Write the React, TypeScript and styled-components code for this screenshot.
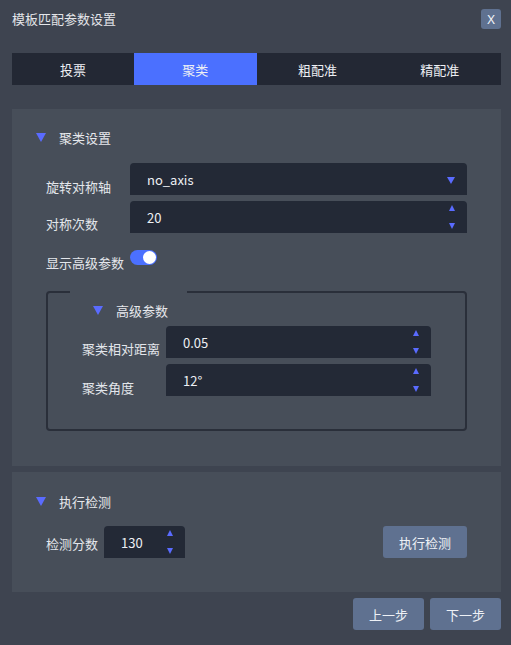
import React from "react";
import styled, { createGlobalStyle } from "styled-components";

const Global = createGlobalStyle`
  html, body { margin: 0; padding: 0; background: #3e4450; }
  * { box-sizing: border-box; }
  body { font-family: "Noto Sans CJK SC", "Noto Sans", sans-serif; font-size: 13px; color: #e3e6eb; }
`;

const Page = styled.div`
  width: 511px;
  height: 645px;
  background: #3e4450;
  padding: 9px 10px 0 12px;
  display: flex;
  flex-direction: column;
`;

const TitleBar = styled.div`
  display: flex;
  align-items: center;
  justify-content: space-between;
  height: 20px;
`;

const Title = styled.div`
  font-size: 13px;
  line-height: 20px;
  color: #e4e6ea;
`;

const CloseButton = styled.button`
  width: 20px;
  height: 20px;
  border: none;
  border-radius: 3px;
  background: #5f7190;
  color: #f2f4f8;
  font-family: "Noto Sans", sans-serif;
  font-size: 13px;
  line-height: 20px;
  padding: 0;
`;

const Tabs = styled.div`
  margin-top: 24px;
  height: 32px;
  display: grid;
  grid-template-columns: repeat(4, 1fr);
  background: #232834;
`;

const Tab = styled.div<{ $active?: boolean }>`
  display: flex;
  align-items: center;
  justify-content: center;
  font-size: 13px;
  color: #eef0f4;
  background: ${(p) => (p.$active ? "#4b70ff" : "transparent")};
`;

const Panel = styled.section<{ $top: number; $pt: number; $pb: number }>`
  margin-top: ${(p) => p.$top}px;
  background: #474e59;
  padding: ${(p) => p.$pt}px 34px ${(p) => p.$pb}px 34px;
  display: flex;
  flex-direction: column;
`;

const SectionHeader = styled.div<{ $indent: number }>`
  display: flex;
  align-items: center;
  height: 20px;
  margin-left: ${(p) => p.$indent}px;
  font-size: 13px;
  color: #e6e8ec;
`;

const Caret = styled.span`
  width: 0;
  height: 0;
  border-left: 5.5px solid transparent;
  border-right: 5.5px solid transparent;
  border-top: 9px solid #5a6bff;
  margin-right: 13px;
`;

const FormRow = styled.div<{ $top: number }>`
  display: grid;
  grid-template-columns: 84px 1fr;
  grid-template-rows: 32px;
  align-items: start;
  margin-top: ${(p) => p.$top}px;
`;

const Label = styled.div<{ $pt: number }>`
  font-size: 13px;
  line-height: 20px;
  padding-top: ${(p) => p.$pt}px;
  color: #e3e6eb;
  white-space: nowrap;
`;

const Field = styled.div<{ $width?: number }>`
  position: relative;
  height: 32px;
  ${(p) => (p.$width ? `width: ${p.$width}px;` : "")}
  background: #232936;
  border-radius: 4px 4px 0 0;
  display: flex;
  align-items: center;
  padding-left: 17px;
  font-size: 13px;
  color: #eef0f4;
`;

const SelectArrow = styled.span`
  position: absolute;
  right: 12px;
  top: 14px;
  width: 0;
  height: 0;
  border-left: 4px solid transparent;
  border-right: 4px solid transparent;
  border-top: 7px solid #5a6bff;
`;

const Spinner = styled.span<{ $right: number }>`
  position: absolute;
  right: ${(p) => p.$right}px;
  top: 4px;
  bottom: 4px;
  display: flex;
  flex-direction: column;
  justify-content: space-between;
`;

const SpinUp = styled.span`
  width: 0;
  height: 0;
  border-left: 3.5px solid transparent;
  border-right: 3.5px solid transparent;
  border-bottom: 6px solid #5a6bff;
`;

const SpinDown = styled.span`
  width: 0;
  height: 0;
  border-left: 3.5px solid transparent;
  border-right: 3.5px solid transparent;
  border-top: 6px solid #5a6bff;
`;

const ToggleRow = styled.div`
  display: grid;
  grid-template-columns: 84px 1fr;
  grid-template-rows: 23px;
  margin-top: 17px;
`;

const Toggle = styled.span`
  position: relative;
  width: 27px;
  height: 15px;
  border-radius: 8px;
  background: #4b70ff;
  &::after {
    content: "";
    position: absolute;
    right: 1px;
    top: 1px;
    width: 13px;
    height: 13px;
    border-radius: 50%;
    background: #ffffff;
  }
`;

const Group = styled.fieldset`
  margin: 18px 0 0 0;
  padding: 0;
  border: 2px solid #2a2f3a;
  border-radius: 4px;
  min-inline-size: 0;
`;

const GroupLegend = styled.legend`
  margin-left: 22px;
  padding: 0;
  width: 117px;
  height: 0;
  font-size: 0;
  line-height: 0;
`;

const GroupBody = styled.div`
  padding: 7px 34px 33px 34px;
  display: flex;
  flex-direction: column;
`;

const ActionRow = styled.div`
  margin-top: 15px;
  display: flex;
  align-items: center;
  height: 32px;
`;

const InlineLabel = styled.div`
  font-size: 13px;
  line-height: 20px;
  padding-top: 3px;
  margin-right: 6px;
  color: #e3e6eb;
`;

const Button = styled.button<{ $width: number }>`
  width: ${(p) => p.$width}px;
  height: 32px;
  border: none;
  border-radius: 3px;
  background: #5f7190;
  color: #eef1f6;
  font-family: "Noto Sans CJK SC", sans-serif;
  font-size: 13px;
  padding: 0;
`;

const PushRight = styled.div`
  margin-left: auto;
`;

const Footer = styled.div`
  margin-top: 6px;
  display: flex;
  justify-content: flex-end;
  gap: 6px;
`;

const NumberField = ({ value, width, right }: { value: string; width?: number; right: number }) => (
  <Field $width={width}>
    {value}
    <Spinner $right={right}>
      <SpinUp />
      <SpinDown />
    </Spinner>
  </Field>
);

export default function App() {
  return (
    <>
      <Global />
      <Page>
        <TitleBar>
          <Title>模板匹配参数设置</Title>
          <CloseButton>X</CloseButton>
        </TitleBar>
        <Tabs>
          <Tab>投票</Tab>
          <Tab $active>聚类</Tab>
          <Tab>粗配准</Tab>
          <Tab>精配准</Tab>
        </Tabs>

        <Panel $top={24} $pt={18} $pb={35}>
          <SectionHeader $indent={-10}>
            <Caret />
            聚类设置
          </SectionHeader>
          <FormRow $top={16}>
            <Label $pt={14}>旋转对称轴</Label>
            <Field>
              no_axis
              <SelectArrow />
            </Field>
          </FormRow>
          <FormRow $top={6}>
            <Label $pt={13}>对称次数</Label>
            <NumberField value="20" right={12} />
          </FormRow>
          <ToggleRow>
            <Label $pt={3}>显示高级参数</Label>
            <Toggle />
          </ToggleRow>
          <Group>
            <GroupLegend />
            <GroupBody>
              <SectionHeader $indent={11}>
                <Caret />
                高级参数
              </SectionHeader>
              <FormRow $top={6}>
                <Label $pt={13}>聚类相对距离</Label>
                <NumberField value="0.05" right={12} />
              </FormRow>
              <FormRow $top={6}>
                <Label $pt={14}>聚类角度</Label>
                <NumberField value="12°" right={12} />
              </FormRow>
            </GroupBody>
          </Group>
        </Panel>

        <Panel $top={6} $pt={19} $pb={34}>
          <SectionHeader $indent={-10}>
            <Caret />
            执行检测
          </SectionHeader>
          <ActionRow>
            <InlineLabel>检测分数</InlineLabel>
            <NumberField value="130" width={81} right={12} />
            <PushRight>
              <Button $width={84}>执行检测</Button>
            </PushRight>
          </ActionRow>
        </Panel>

        <Footer>
          <Button $width={71}>上一步</Button>
          <Button $width={71}>下一步</Button>
        </Footer>
      </Page>
    </>
  );
}
